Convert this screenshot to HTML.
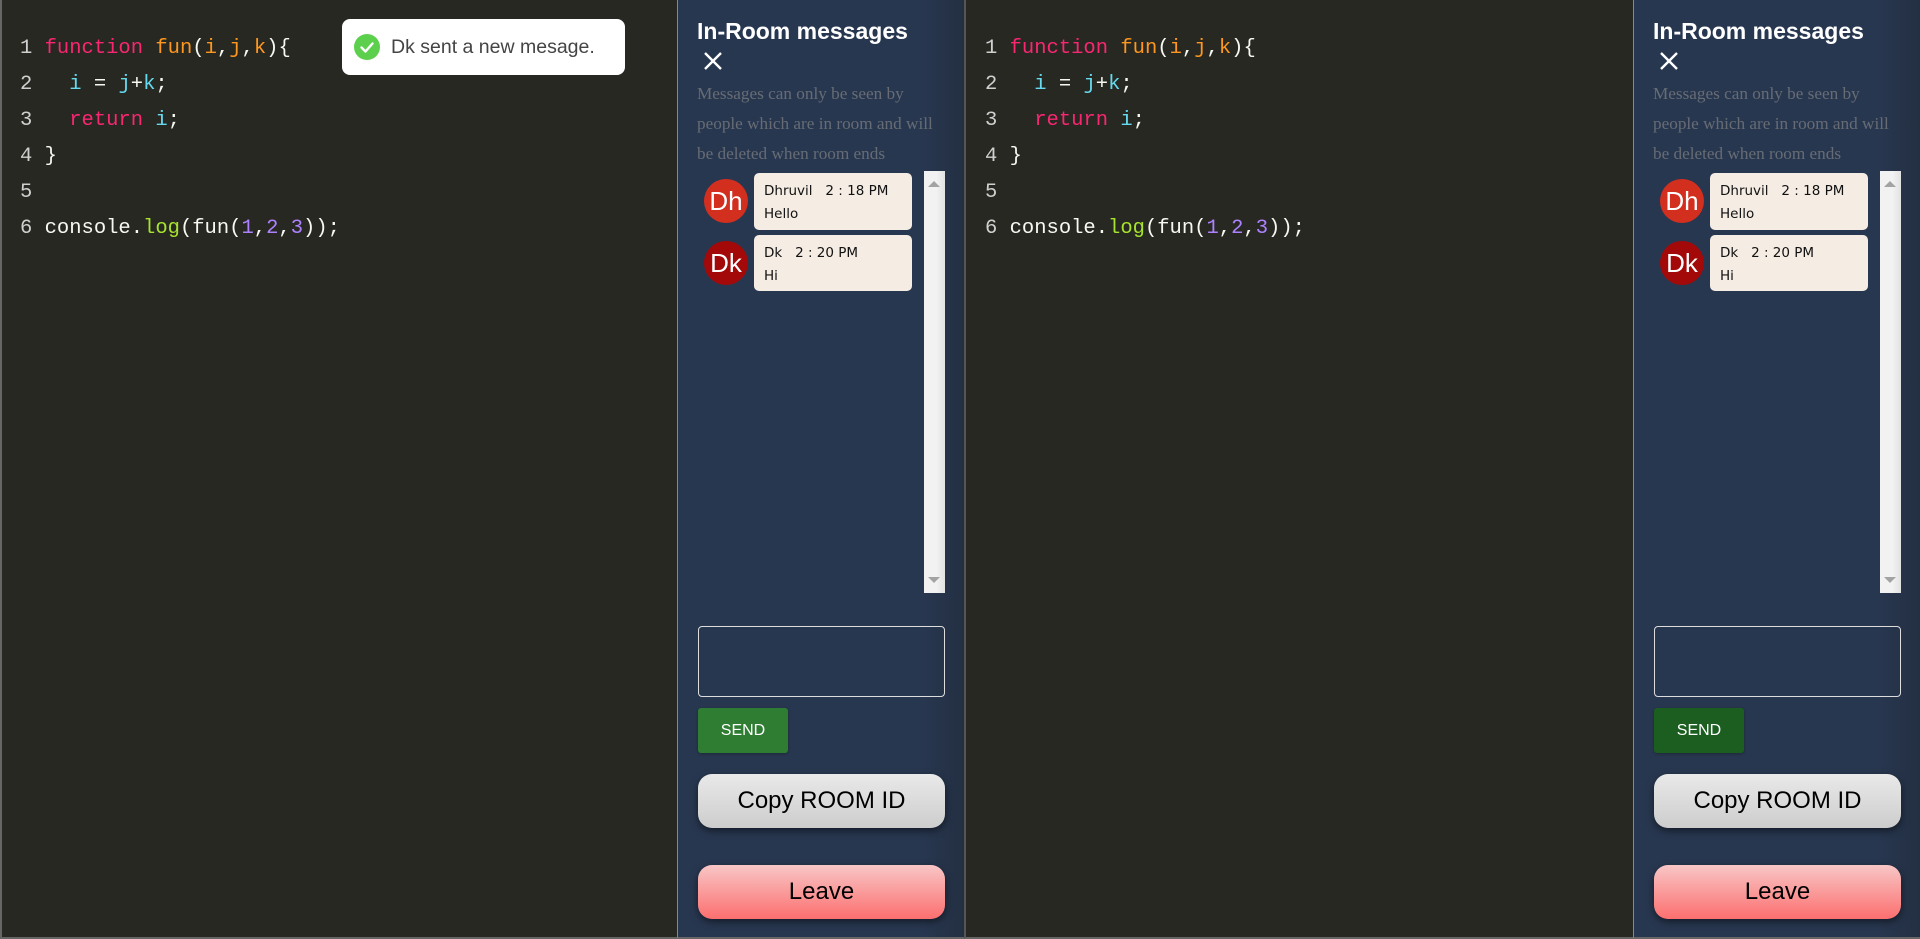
<!DOCTYPE html>
<html><head><meta charset="utf-8"><style>
*{margin:0;padding:0;box-sizing:border-box}
html,body{width:1920px;height:939px;overflow:hidden;background:#272822;position:relative;font-family:"Liberation Sans",sans-serif}
.ed{position:absolute;top:0;height:939px;background:#272822;border-bottom:2px solid #666}
.code{position:absolute;top:31px;font-family:"Liberation Mono",monospace;font-size:20.5px;color:#f8f8f2;line-height:36px;white-space:pre}
.ln{color:#d0d0d0}
.k{color:#f92672}.f{color:#fd971f}.c{color:#66d9ef}.g{color:#a6e22e}.n{color:#ae81ff}
.sb{position:absolute;top:0;width:287px;height:939px;background:linear-gradient(90deg,#283750 85%,#232f42);border-left:1px solid #888;border-bottom:2px solid #666}
.title{position:absolute;left:19px;top:18px;color:#fff;font-weight:bold;font-size:23px}
.x{position:absolute;left:26px;top:52px;width:18px;height:18px}
.desc{position:absolute;left:19px;top:79px;white-space:nowrap;font-family:"Liberation Serif",serif;font-size:17.2px;line-height:30px;color:#676c74}
.scroll{position:absolute;left:246px;top:171px;width:21px;height:422px;background:linear-gradient(90deg,#f2f2f2 60%,#e2e2e2)}
.up,.dn{position:absolute;left:4px;width:0;height:0;border-left:6px solid transparent;border-right:6px solid transparent}
.up{top:10px;border-bottom:6px solid #a3a3a3}.dn{bottom:10px;border-top:6px solid #a3a3a3}
.av{position:absolute;left:26px;width:44px;height:44px;border-radius:50%;color:#fff;font-size:26px;text-align:center;line-height:44px}
.bub{position:absolute;left:76px;width:158px;background:#f5ede4;border-radius:5px;font-family:"DejaVu Sans",sans-serif;font-size:13.5px;color:#111;padding:7px 10px;line-height:23px}
.ta{position:absolute;left:20px;top:626px;width:247px;height:71px;border:1px solid #ddd;border-radius:4px}
.send{position:absolute;left:20px;top:708px;width:90px;height:45px;border-radius:3px;color:#fff;font-size:16px;text-align:center;line-height:45px;box-shadow:0 1px 3px rgba(0,0,0,.3)}
.btn{position:absolute;left:20px;width:247px;height:54px;border-radius:14px;text-align:center;line-height:54px;font-size:24px;color:#000;box-shadow:0 3px 8px rgba(0,0,0,.5)}
.copy{top:774px;background:linear-gradient(#e9e9e9,#cdcdcd)}
.leave{top:865px;background:linear-gradient(#f8c6c6,#fc6f6f)}
.toast{position:absolute;left:342px;top:19px;width:283px;height:56px;background:#fff;border-radius:8px;font-size:19.5px;color:#444;line-height:56px;padding-left:49px}
.chk{position:absolute;left:12px;top:15px;width:26px;height:26px;border-radius:50%;background:#5ccf4c}
.chk svg{display:block}
</style></head><body>

<div class="ed" style="left:0;width:677px;border-left:2px solid #666"></div>
<div class="code" style="left:20px"><span class="ln">1</span> <span class="k">function</span> <span class="f">fun</span>(<span class="f">i</span>,<span class="f">j</span>,<span class="f">k</span>){
<span class="ln">2</span>   <span class="c">i</span> = <span class="c">j</span>+<span class="c">k</span>;
<span class="ln">3</span>   <span class="k">return</span> <span class="c">i</span>;
<span class="ln">4</span> }
<span class="ln">5</span>
<span class="ln">6</span> console.<span class="g">log</span>(fun(<span class="n">1</span>,<span class="n">2</span>,<span class="n">3</span>));</div>

<div class="ed" style="left:964px;width:669px;border-left:2px solid #555"></div>
<div class="code" style="left:985px"><span class="ln">1</span> <span class="k">function</span> <span class="f">fun</span>(<span class="f">i</span>,<span class="f">j</span>,<span class="f">k</span>){
<span class="ln">2</span>   <span class="c">i</span> = <span class="c">j</span>+<span class="c">k</span>;
<span class="ln">3</span>   <span class="k">return</span> <span class="c">i</span>;
<span class="ln">4</span> }
<span class="ln">5</span>
<span class="ln">6</span> console.<span class="g">log</span>(fun(<span class="n">1</span>,<span class="n">2</span>,<span class="n">3</span>));</div>

<div class="sb" style="left:677px">
<div class="title">In-Room messages</div>
<svg class="x" viewBox="0 0 18 18"><path d="M1 1L17 17M17 1L1 17" stroke="#fff" stroke-width="2.4"/></svg>
<div class="desc">Messages can only be seen by<br>people which are in room and will<br>be deleted when room ends</div>
<div class="av" style="top:179px;background:#d22f1f">Dh</div>
<div class="bub" style="top:173px;height:57px">Dhruvil&nbsp;&nbsp; 2 : 18 PM<br>Hello</div>
<div class="av" style="top:241px;background:#a30909">Dk</div>
<div class="bub" style="top:235px;height:56px">Dk&nbsp;&nbsp; 2 : 20 PM<br>Hi</div>
<div class="scroll"><div class="up"></div><div class="dn"></div></div>
<div class="ta"></div>
<div class="send" style="background:#2e7d32">SEND</div>
<div class="btn copy">Copy ROOM ID</div>
<div class="btn leave">Leave</div>
</div>

<div class="sb" style="left:1633px">
<div class="title">In-Room messages</div>
<svg class="x" viewBox="0 0 18 18"><path d="M1 1L17 17M17 1L1 17" stroke="#fff" stroke-width="2.4"/></svg>
<div class="desc">Messages can only be seen by<br>people which are in room and will<br>be deleted when room ends</div>
<div class="av" style="top:179px;background:#d22f1f">Dh</div>
<div class="bub" style="top:173px;height:57px">Dhruvil&nbsp;&nbsp; 2 : 18 PM<br>Hello</div>
<div class="av" style="top:241px;background:#a30909">Dk</div>
<div class="bub" style="top:235px;height:56px">Dk&nbsp;&nbsp; 2 : 20 PM<br>Hi</div>
<div class="scroll"><div class="up"></div><div class="dn"></div></div>
<div class="ta"></div>
<div class="send" style="background:#1b5e20">SEND</div>
<div class="btn copy">Copy ROOM ID</div>
<div class="btn leave">Leave</div>
</div>

<div class="toast"><div class="chk"><svg width="26" height="26" viewBox="0 0 26 26"><path d="M7.5 13.5L11.5 17.5L18.5 9.5" stroke="#fff" stroke-width="2.4" fill="none" stroke-linecap="round" stroke-linejoin="round"/></svg></div>Dk sent a new mesage.</div>
</body></html>
